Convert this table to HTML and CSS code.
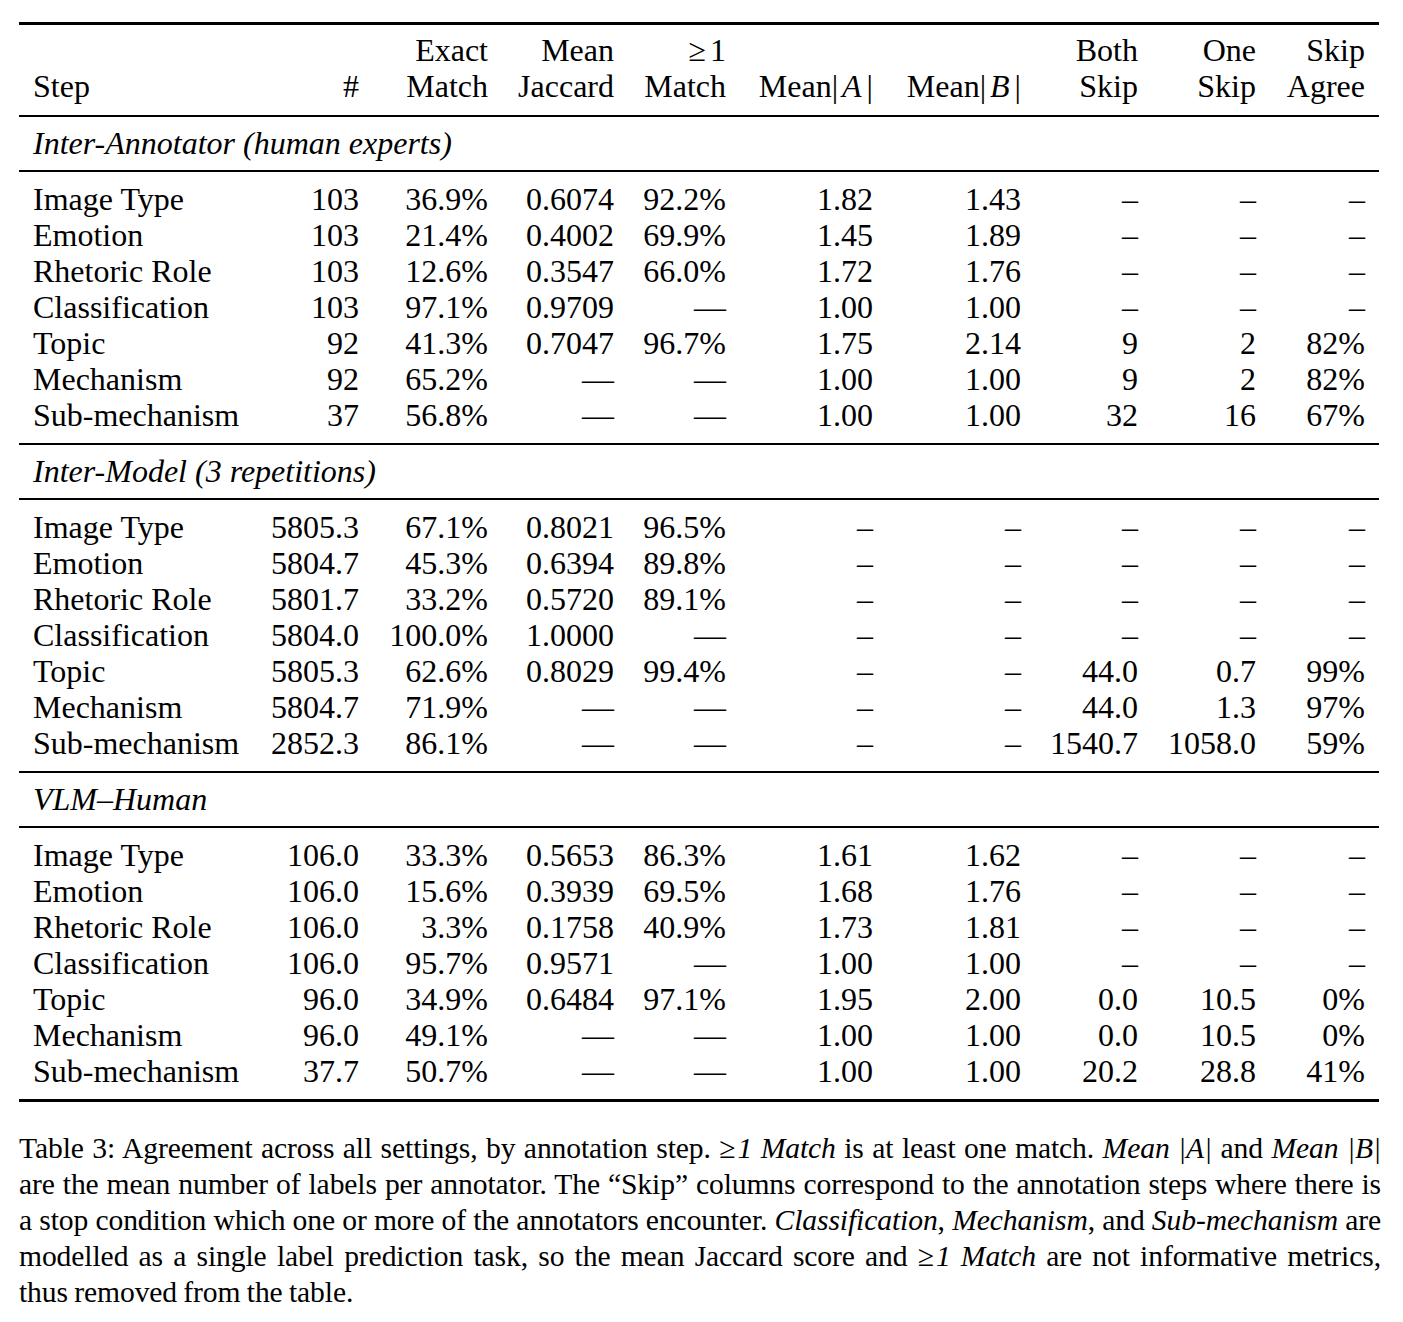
FILE: index.html
```html
<!DOCTYPE html>
<html lang="en">
<head>
    <meta charset="UTF-8">
    <title>Table 3: Agreement across all settings</title>
    <link rel="stylesheet" href="styles.css">
</head>
<body>
    <div class="page">
        <table class="agree">
            <colgroup>
                <col class="c-step"><col class="c-n"><col class="c-exact"><col class="c-jac">
                <col class="c-one"><col class="c-ma"><col class="c-mb"><col class="c-both">
                <col class="c-oneskip"><col class="c-agree">
            </colgroup>
            <thead>
                <tr>
                    <th class="step">Step</th>
                    <th>#</th>
                    <th>Exact<br>Match</th>
                    <th>Mean<br>Jaccard</th>
                    <th><span class="geq">&ge;</span>1<br>Match</th>
                    <th>Mean|<i class="var">A</i>|</th>
                    <th>Mean|<i class="var">B</i>|</th>
                    <th>Both<br>Skip</th>
                    <th>One<br>Skip</th>
                    <th>Skip<br>Agree</th>
                </tr>
            </thead>

            <!-- Inter-Annotator -->
            <tbody class="section">
                <tr><td colspan="10"><i>Inter-Annotator (human experts)</i></td></tr>
            </tbody>
            <tbody class="rows">
                <tr><td>Image Type</td><td>103</td><td>36.9%</td><td>0.6074</td><td>92.2%</td><td>1.82</td><td>1.43</td><td>&ndash;</td><td>&ndash;</td><td>&ndash;</td></tr>
                <tr><td>Emotion</td><td>103</td><td>21.4%</td><td>0.4002</td><td>69.9%</td><td>1.45</td><td>1.89</td><td>&ndash;</td><td>&ndash;</td><td>&ndash;</td></tr>
                <tr><td>Rhetoric Role</td><td>103</td><td>12.6%</td><td>0.3547</td><td>66.0%</td><td>1.72</td><td>1.76</td><td>&ndash;</td><td>&ndash;</td><td>&ndash;</td></tr>
                <tr><td>Classification</td><td>103</td><td>97.1%</td><td>0.9709</td><td>&mdash;</td><td>1.00</td><td>1.00</td><td>&ndash;</td><td>&ndash;</td><td>&ndash;</td></tr>
                <tr><td>Topic</td><td>92</td><td>41.3%</td><td>0.7047</td><td>96.7%</td><td>1.75</td><td>2.14</td><td>9</td><td>2</td><td>82%</td></tr>
                <tr><td>Mechanism</td><td>92</td><td>65.2%</td><td>&mdash;</td><td>&mdash;</td><td>1.00</td><td>1.00</td><td>9</td><td>2</td><td>82%</td></tr>
                <tr><td>Sub-mechanism</td><td>37</td><td>56.8%</td><td>&mdash;</td><td>&mdash;</td><td>1.00</td><td>1.00</td><td>32</td><td>16</td><td>67%</td></tr>
            </tbody>

            <!-- Inter-Model -->
            <tbody class="section">
                <tr><td colspan="10"><i>Inter-Model (3 repetitions)</i></td></tr>
            </tbody>
            <tbody class="rows">
                <tr><td>Image Type</td><td>5805.3</td><td>67.1%</td><td>0.8021</td><td>96.5%</td><td>&ndash;</td><td>&ndash;</td><td>&ndash;</td><td>&ndash;</td><td>&ndash;</td></tr>
                <tr><td>Emotion</td><td>5804.7</td><td>45.3%</td><td>0.6394</td><td>89.8%</td><td>&ndash;</td><td>&ndash;</td><td>&ndash;</td><td>&ndash;</td><td>&ndash;</td></tr>
                <tr><td>Rhetoric Role</td><td>5801.7</td><td>33.2%</td><td>0.5720</td><td>89.1%</td><td>&ndash;</td><td>&ndash;</td><td>&ndash;</td><td>&ndash;</td><td>&ndash;</td></tr>
                <tr><td>Classification</td><td>5804.0</td><td>100.0%</td><td>1.0000</td><td>&mdash;</td><td>&ndash;</td><td>&ndash;</td><td>&ndash;</td><td>&ndash;</td><td>&ndash;</td></tr>
                <tr><td>Topic</td><td>5805.3</td><td>62.6%</td><td>0.8029</td><td>99.4%</td><td>&ndash;</td><td>&ndash;</td><td>44.0</td><td>0.7</td><td>99%</td></tr>
                <tr><td>Mechanism</td><td>5804.7</td><td>71.9%</td><td>&mdash;</td><td>&mdash;</td><td>&ndash;</td><td>&ndash;</td><td>44.0</td><td>1.3</td><td>97%</td></tr>
                <tr><td>Sub-mechanism</td><td>2852.3</td><td>86.1%</td><td>&mdash;</td><td>&mdash;</td><td>&ndash;</td><td>&ndash;</td><td>1540.7</td><td>1058.0</td><td>59%</td></tr>
            </tbody>

            <!-- VLM-Human -->
            <tbody class="section">
                <tr><td colspan="10"><i>VLM&ndash;Human</i></td></tr>
            </tbody>
            <tbody class="rows last">
                <tr><td>Image Type</td><td>106.0</td><td>33.3%</td><td>0.5653</td><td>86.3%</td><td>1.61</td><td>1.62</td><td>&ndash;</td><td>&ndash;</td><td>&ndash;</td></tr>
                <tr><td>Emotion</td><td>106.0</td><td>15.6%</td><td>0.3939</td><td>69.5%</td><td>1.68</td><td>1.76</td><td>&ndash;</td><td>&ndash;</td><td>&ndash;</td></tr>
                <tr><td>Rhetoric Role</td><td>106.0</td><td>3.3%</td><td>0.1758</td><td>40.9%</td><td>1.73</td><td>1.81</td><td>&ndash;</td><td>&ndash;</td><td>&ndash;</td></tr>
                <tr><td>Classification</td><td>106.0</td><td>95.7%</td><td>0.9571</td><td>&mdash;</td><td>1.00</td><td>1.00</td><td>&ndash;</td><td>&ndash;</td><td>&ndash;</td></tr>
                <tr><td>Topic</td><td>96.0</td><td>34.9%</td><td>0.6484</td><td>97.1%</td><td>1.95</td><td>2.00</td><td>0.0</td><td>10.5</td><td>0%</td></tr>
                <tr><td>Mechanism</td><td>96.0</td><td>49.1%</td><td>&mdash;</td><td>&mdash;</td><td>1.00</td><td>1.00</td><td>0.0</td><td>10.5</td><td>0%</td></tr>
                <tr><td>Sub-mechanism</td><td>37.7</td><td>50.7%</td><td>&mdash;</td><td>&mdash;</td><td>1.00</td><td>1.00</td><td>20.2</td><td>28.8</td><td>41%</td></tr>
            </tbody>
        </table>

        <!-- caption lines kept as in the paper's typeset version -->
        <p class="caption">
            <span class="line">Table 3: Agreement across all settings, by annotation step. <span class="geq">&ge;</span><i>1 Match</i> is at least one match. <i>Mean |A|</i> and <i>Mean |B|</i></span>
            <span class="line">are the mean number of labels per annotator. The &ldquo;Skip&rdquo; columns correspond to the annotation steps where there is</span>
            <span class="line">a stop condition which one or more of the annotators encounter. <i>Classification</i>, <i>Mechanism</i>, and <i>Sub-mechanism</i> are</span>
            <span class="line">modelled as a single label prediction task, so the mean Jaccard score and <span class="geq">&ge;</span><i>1 Match</i> are not informative metrics,</span>
            <span class="line end">thus removed from the table.</span>
        </p>
    </div>
</body>
</html>
```

FILE: styles.css
```css
* {
    margin: 0;
    padding: 0;
    box-sizing: border-box;
}

body {
    font-family: "Liberation Serif", "Times New Roman", serif;
    font-size: 32px;
    color: #000;
    background: #fff;
}

.page {
    width: 1403px;
    padding: 22px 0 0 19px;
}

/* Table */
.agree {
    width: 1360px;
    border-collapse: collapse;
    table-layout: fixed;
    border-top: 3px solid #000;
    border-bottom: 3px solid #000;
}

.c-step { width: 236px; }
.c-n { width: 118px; }
.c-exact { width: 129px; }
.c-jac { width: 126px; }
.c-one { width: 112px; }
.c-ma { width: 147px; }
.c-mb { width: 148px; }
.c-both { width: 117px; }
.c-oneskip { width: 118px; }
.c-agree { width: 109px; }

.agree th,
.agree td {
    padding: 0 14px;
    line-height: 36px;
    text-align: right;
    white-space: nowrap;
    font-weight: normal;
}

.agree th:first-child,
.agree td:first-child {
    text-align: left;
}

.agree thead th {
    vertical-align: bottom;
    padding-top: 7px;
    padding-bottom: 11px;
    border-bottom: 2px solid #000;
}

/* math-ish bits in the header */
.var {
    margin: 0 5px 0 4px;
}

.geq {
    display: inline-block;
    margin-right: 4px;
}

.section td {
    padding-top: 8px;
    padding-bottom: 9px;
    border-bottom: 2px solid #000;
}

.rows tr:first-child td {
    padding-top: 8.5px;
}

.rows tr:last-child td {
    padding-bottom: 10.5px;
}

.rows {
    border-bottom: 2px solid #000;
}

.rows.last {
    border-bottom: 3px solid #000;
}

/* Caption */
.caption {
    width: 1362px;
    margin-top: 28px;
    font-size: 29.6px;
    line-height: 36px;
}

.caption .line {
    display: block;
    white-space: nowrap;
    text-align: justify;
    text-align-last: justify;
    letter-spacing: -0.1px;
    word-spacing: -1px;
}

.caption .line.end {
    text-align-last: left;
}

.caption .geq {
    margin-right: 2px;
}
```
